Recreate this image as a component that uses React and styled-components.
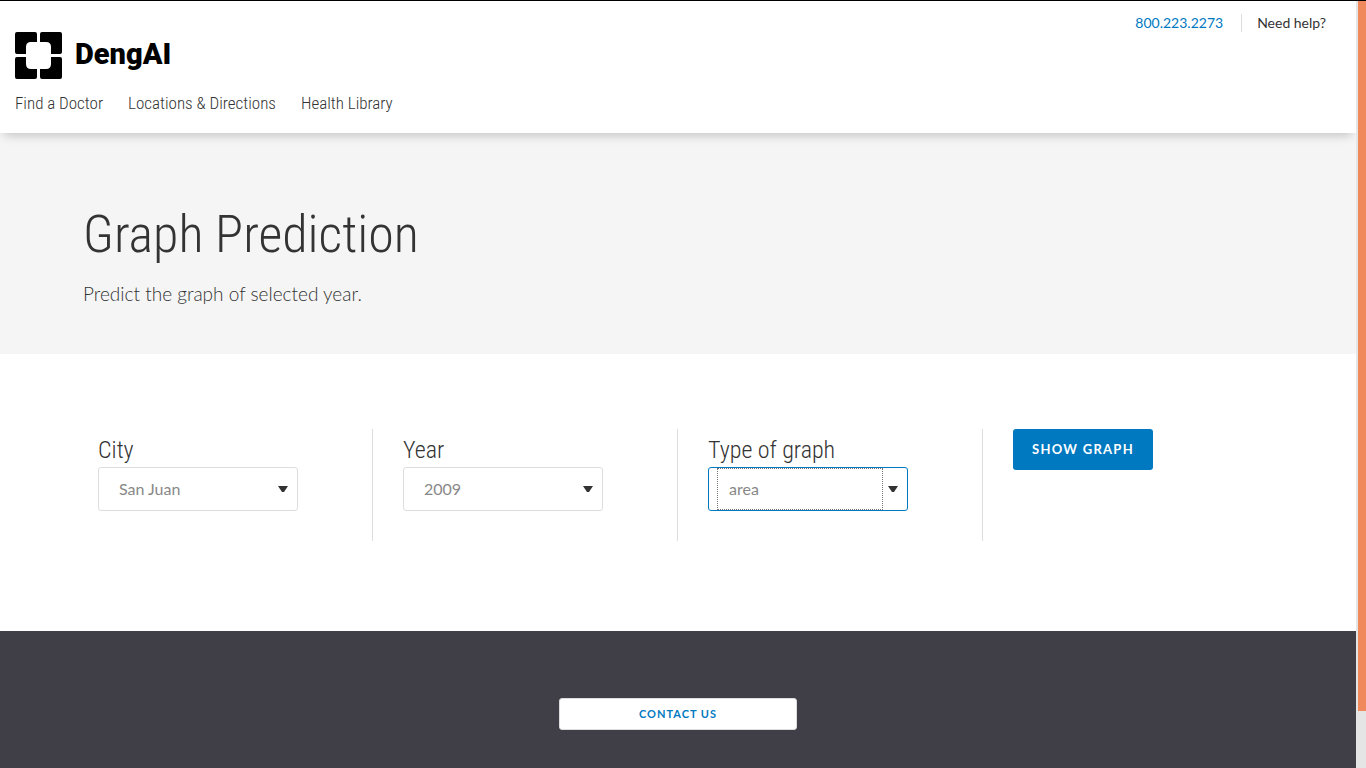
import React from "react";
import styled, { createGlobalStyle } from "styled-components";

const condensed = `"Roboto Condensed", "Noto Sans CJK SC", "Liberation Sans", sans-serif`;
const body = `Lato, "Liberation Sans", sans-serif`;

const GlobalStyle = createGlobalStyle`
  *, *::before, *::after { box-sizing: border-box; }
  body {
    margin: 0;
    background: #fff;
    color: #333;
    font-family: ${body};
    font-size: 16px;
  }
`;

const Frame = styled.div`
  display: flex;
  align-items: flex-start;
  border-top: 1px solid #000;
`;

const Page = styled.div`
  flex: 1;
  min-width: 0;
  min-height: calc(100vh - 1px);
  display: flex;
  flex-direction: column;
`;

const ScrollTrack = styled.div`
  position: sticky;
  top: 0;
  width: 10px;
  height: calc(100vh - 1px);
  padding-left: 2px;
  background: #e5e5e5;
`;

const ScrollThumb = styled.div`
  height: 92.6%;
  background: #f08a5d;
`;

const Header = styled.header`
  position: relative;
  padding: 13px 30px 19px 15px;
  background: #fff;
  box-shadow: 0 6px 10px -4px rgba(0, 0, 0, 0.22);
`;

const Utility = styled.div`
  display: flex;
  justify-content: flex-end;
  font-size: 14px;
  line-height: 18px;
`;

const UtilityLink = styled.a`
  color: ${(p) => (p.$accent ? "#0079c1" : "#333")};
  text-decoration: none;

  & + & {
    margin-left: 18px;
    padding-left: 15px;
    border-left: 1px solid #ddd;
  }
`;

const Brand = styled.a`
  display: flex;
  align-items: center;
  gap: 13px;
  width: fit-content;
  color: #000;
  text-decoration: none;
  font-family: Roboto, "Liberation Sans", sans-serif;
  font-size: 29px;
  font-weight: 900;
  line-height: 44px;
`;

const BrandName = styled.span`
  padding-bottom: 3px;
`;

const Nav = styled.nav`
  display: flex;
  gap: 25px;
  margin-top: 13px;
`;

const NavLink = styled.a`
  color: #333;
  font-family: ${condensed};
  font-size: 17px;
  font-weight: 300;
  line-height: 22px;
  text-decoration: none;
`;

const Hero = styled.section`
  padding: 70px 15px 47px;
  background: #f5f5f5;
`;

const HeroInner = styled.div`
  max-width: 1190px;
  margin: 0 auto;
`;

const Title = styled.h1`
  margin: 0 0 13px;
  font-family: ${condensed};
  font-size: 52px;
  font-weight: 300;
  line-height: 64px;
`;

const Lead = styled.p`
  margin: 0;
  font-size: 19px;
  font-weight: 300;
  line-height: 27px;
`;

const Filters = styled.form`
  display: grid;
  grid-template-columns: repeat(4, 1fr);
  width: 100%;
  max-width: 1220px;
  margin: 0 auto;
  padding: 75px 0 90px;
`;

const Field = styled.div`
  padding: 0 30px 30px;

  &:not(:last-child) {
    border-right: 1px solid #ddd;
  }
`;

const Label = styled.label`
  display: block;
  padding-top: 4px;
  font-family: ${condensed};
  font-size: 24px;
  font-weight: 300;
  line-height: 34px;
`;

const SelectBox = styled.div`
  position: relative;
  max-width: 200px;
`;

const Select = styled.select`
  display: block;
  width: 100%;
  height: 44px;
  padding: 0 40px 2px 20px;
  appearance: none;
  border: 1px solid ${(p) => (p.$active ? "#0079c1" : "#ddd")};
  border-radius: 3px;
  outline: none;
  background: #fff;
  color: #888;
  font-family: ${body};
  font-size: 16px;
`;

const FocusRing = styled.span`
  position: absolute;
  inset: 1px 25px 1px 9px;
  border: 1px dotted #777;
  pointer-events: none;
`;

const Caret = styled.svg`
  position: absolute;
  top: 19px;
  right: 10px;
  width: 10px;
  height: 6px;
  fill: #333;
  pointer-events: none;
`;

const ShowButton = styled.button`
  width: 140px;
  height: 41px;
  padding: 0 0 2px;
  border: 0;
  border-radius: 3px;
  background: #0079c1;
  color: #fff;
  font-family: ${body};
  font-size: 13px;
  font-weight: 700;
  letter-spacing: 0.1em;
  text-transform: uppercase;
`;

const Footer = styled.footer`
  flex: 1;
  display: flex;
  justify-content: center;
  align-items: flex-start;
  padding: 67px 15px 38px;
  background: #403f48;
`;

const ContactButton = styled.button`
  width: 238px;
  height: 32px;
  padding: 0 0 2px;
  border: 1px solid #ddd;
  border-radius: 3px;
  background: #fff;
  color: #0079c1;
  font-family: ${body};
  font-size: 11px;
  font-weight: 700;
  letter-spacing: 1px;
  text-transform: uppercase;
`;

function LogoMark() {
  const quarter =
    "M2 0H20Q22 0 22 2V10H16Q11 10 11 15V22H2Q0 22 0 20V2Q0 0 2 0Z";
  return (
    <svg width="47" height="47" viewBox="0 0 47 47" aria-hidden="true">
      <path d={quarter} />
      <path d={quarter} transform="translate(47 0) scale(-1 1)" />
      <path d={quarter} transform="translate(0 47) scale(1 -1)" />
      <path d={quarter} transform="translate(47 47) scale(-1 -1)" />
    </svg>
  );
}

function SelectField({ id, label, options, active }) {
  return (
    <Field>
      <Label htmlFor={id}>{label}</Label>
      <SelectBox>
        <Select id={id} $active={active}>
          {options.map((o) => (
            <option key={o}>{o}</option>
          ))}
        </Select>
        {active && <FocusRing />}
        <Caret viewBox="0 0 10 6" aria-hidden="true">
          <path d="M0 0H10L6 6H4Z" />
        </Caret>
      </SelectBox>
    </Field>
  );
}

export default function App() {
  return (
    <>
      <GlobalStyle />
      <Frame>
        <Page>
          <Header>
            <Utility>
              <UtilityLink href="tel:8002232273" $accent>
                800.223.2273
              </UtilityLink>
              <UtilityLink href="#help">Need help?</UtilityLink>
            </Utility>
            <Brand href="#home">
              <LogoMark />
              <BrandName>DengAI</BrandName>
            </Brand>
            <Nav>
              <NavLink href="#doctor">Find a Doctor</NavLink>
              <NavLink href="#locations">Locations &amp; Directions</NavLink>
              <NavLink href="#library">Health Library</NavLink>
            </Nav>
          </Header>
          <Hero>
            <HeroInner>
              <Title>Graph Prediction</Title>
              <Lead>Predict the graph of selected year.</Lead>
            </HeroInner>
          </Hero>
          <Filters onSubmit={(e) => e.preventDefault()}>
            <SelectField id="city" label="City" options={["San Juan"]} />
            <SelectField id="year" label="Year" options={["2009"]} />
            <SelectField id="type" label="Type of graph" options={["area"]} active />
            <Field>
              <ShowButton type="submit">Show graph</ShowButton>
            </Field>
          </Filters>
          <Footer>
            <ContactButton type="button">Contact us</ContactButton>
          </Footer>
        </Page>
        <ScrollTrack aria-hidden="true">
          <ScrollThumb />
        </ScrollTrack>
      </Frame>
    </>
  );
}
